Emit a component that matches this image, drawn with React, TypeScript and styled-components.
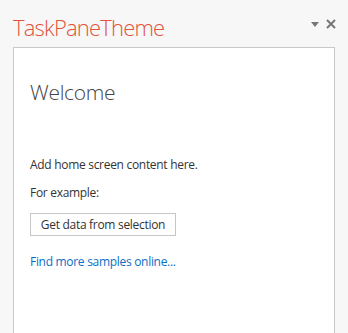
import { FC } from 'react'
import styled, { createGlobalStyle } from 'styled-components'

const GlobalStyle = createGlobalStyle`
  html, body {
    margin: 0;
    padding: 0;
    height: 100%;
    background: #f7f7f7;
    overflow: hidden;
  }
  #root {
    height: 100%;
  }
`

const Pane = styled.div`
  display: flex;
  flex-direction: column;
  height: 100%;
  padding: 0 13px 0 13px;
  box-sizing: border-box;
  font-family: 'Open Sans', 'Noto Sans', sans-serif;
`

const Header = styled.div`
  display: flex;
  align-items: center;
  justify-content: space-between;
  height: 47px;
`

const Title = styled.div`
  font-size: 22px;
  font-weight: 300;
  color: #e2523c;
  letter-spacing: -0.8px;
  padding-top: 6px;
`

const Controls = styled.div`
  display: flex;
  align-items: center;
  gap: 7px;
  margin-right: -1px;
  padding-top: 1px;
`

const Card = styled.div`
  flex: 1;
  background: #fff;
  border: 1px solid #c8c8c8;
  border-bottom: none;
  padding: 30px 16px 0 16px;
  color: #333;
`

const Heading = styled.h1`
  margin: 0 0 50px 0;
  font-size: 21px;
  font-weight: 300;
  color: #444;
  letter-spacing: -0.3px;
`

const Text = styled.p`
  margin: 0 0 11px 0;
  font-size: 12px;
  letter-spacing: -0.3px;
  color: #333;
`

const Button = styled.button`
  display: inline-flex;
  align-items: center;
  justify-content: center;
  width: 146px;
  height: 23px;
  margin-top: 0;
  padding: 0;
  background: #fff;
  border: 1px solid #c6c6c6;
  font-family: inherit;
  font-size: 12px;
  letter-spacing: -0.3px;
  color: #333;
  margin-bottom: 17px;
`

const Link = styled.a`
  display: block;
  font-size: 12px;
  letter-spacing: -0.3px;
  color: #0b6ec5;
  text-decoration: none;
`

const App: FC = () => (
  <>
    <GlobalStyle />
    <Pane>
      <Header>
        <Title>TaskPaneTheme</Title>
        <Controls>
          <svg width="8" height="5" viewBox="0 0 8 5">
            <path d="M0 0 H8 L4 5 Z" fill="#777" />
          </svg>
          <svg width="10" height="10" viewBox="0 0 10 10">
            <path d="M1 1 L9 9 M9 1 L1 9" stroke="#777" strokeWidth="2" />
          </svg>
        </Controls>
      </Header>
      <Card>
        <Heading>Welcome</Heading>
        <Text>Add home screen content here.</Text>
        <Text>For example:</Text>
        <Button>Get data from selection</Button>
        <Link href="#">Find more samples online...</Link>
      </Card>
    </Pane>
  </>
)

export default App
